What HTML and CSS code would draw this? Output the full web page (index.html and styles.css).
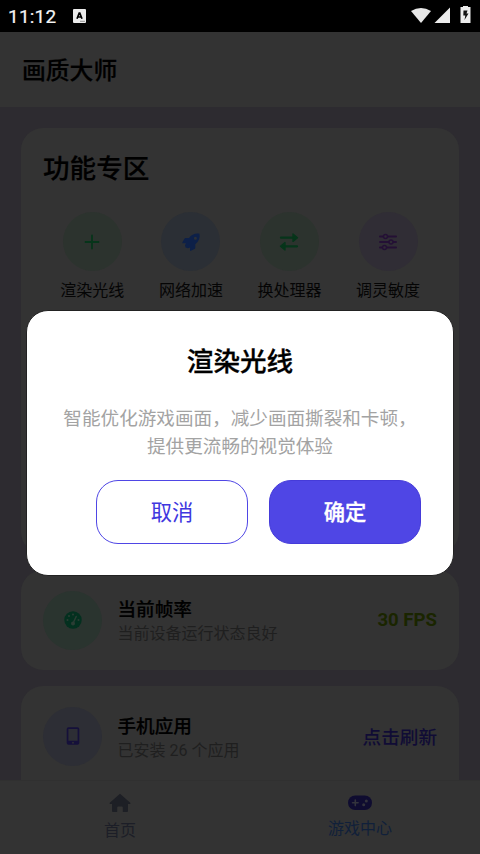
FILE: index.html
```html
<!DOCTYPE html>
<html lang="zh-CN">
<head>
<meta charset="utf-8">
<title>画质大师</title>
<link rel="stylesheet" href="styles.css">
</head>
<body>
<div class="screen">
  <div class="status">
    <span class="time">11:12</span>
    <svg class="kbd" width="13" height="14" viewBox="0 0 13 14"><rect width="13" height="14" rx="1" fill="#ececec"/><path d="M4 9.800 6.200 4.200H6.800L9 9.800M4.600 8h3.800" fill="none" stroke="#000" stroke-width="1.700"/><path d="M7 12.300h5" stroke="#777" stroke-width=".8"/></svg>
    <svg class="signals" width="62" height="20" viewBox="0 0 62 20"><path d="M1 5Q11-1 21 5L11 17Z" fill="#e8e8e8"/><path d="M24.500 17 40 1.500V17Z" fill="#ececec"/><path d="M50.500 1H53V0h5v1h2.500V17h-10Z" fill="#ececec"/><path d="M53.500 4.500h4l-1 3h2L54.500 14l.8-4.500h-2Z" fill="#111"/></svg>
  </div>
  <header class="appbar">画质大师</header>
  <main class="content">
    <section class="card features">
      <h2>功能专区</h2>
      <div class="grid">
        <div class="feature"><span class="disc green"><svg width="30" height="30" viewBox="0 0 30 30"><path d="M15 8.500v13M8.500 15h13" stroke="#06351a" stroke-width="1.800" stroke-linecap="round"/></svg></span>渲染光线</div>
        <div class="feature"><span class="disc blue"><svg width="30" height="30" viewBox="0 0 30 30"><path fill="#0d2048" fill-rule="evenodd" d="M23.500 6.700C19 6 15.500 7.500 13 11H9.800Q8.800 11 8.300 12L6.300 15.400Q6 16.300 7 16.300L10 16.200 9 18.300 9.500 20.500 11.900 21.200 14.100 20.500 14 23.200Q14 24.200 15 23.800L18.500 21.900Q19.300 21.400 19.300 20.400V17.200C22.800 14.500 24.300 11 23.500 6.700ZM19.400 9.700a1.500 1.500 0 1 1 0 3 1.500 1.500 0 0 1 0-3Z"/></svg></span>网络加速</div>
        <div class="feature"><span class="disc green"><svg width="30" height="30" viewBox="0 0 30 30"><path d="M7 10.700H19M11 19.300H23" stroke="#06351a" stroke-width="2.300" stroke-linecap="round"/><path d="M19 7v7.400l4.500-3.700ZM11 15.600V23l-4.500-3.700Z" fill="#06351a" stroke="#06351a" stroke-width="1.400" stroke-linejoin="round"/></svg></span>换处理器</div>
        <div class="feature"><span class="disc purple"><svg width="30" height="30" viewBox="0 0 30 30"><path d="M7 9.500h16M7 15h16M7 20.500h16" stroke="#241035" stroke-width="2" stroke-linecap="round"/><g fill="#302d35" stroke="#241035" stroke-width="1.500"><circle cx="12.500" cy="9.500" r="2"/><circle cx="18" cy="15" r="2"/><circle cx="11.500" cy="20.500" r="2"/></g></svg></span>调灵敏度</div>
      </div>
    </section>
    <section class="card row">
      <span class="disc mint"><svg width="18" height="18" viewBox="0 0 18 18"><circle cx="9" cy="9" r="8.700" fill="#03301f"/><path d="M9.200 12 12.200 5.500" stroke="#2b3d34" stroke-width="1.500" stroke-linecap="round"/><g fill="#2b3d34"><circle cx="9" cy="12.500" r="2"/><circle cx="9" cy="3.500" r="1"/><circle cx="5" cy="5" r="1"/><circle cx="3.500" cy="9" r="1"/><circle cx="14.500" cy="9" r="1"/></g></svg></span>
      <div class="info"><b>当前帧率</b><span>当前设备运行状态良好</span></div>
      <strong class="value fps">30 FPS</strong>
    </section>
    <section class="card row apps">
      <span class="disc indigo"><svg width="14" height="18" viewBox="0 0 14 18"><path fill="#15103a" fill-rule="evenodd" d="M2.500.3h9a1.800 1.800 0 0 1 1.800 1.800v13.800a1.800 1.800 0 0 1-1.800 1.800h-9A1.800 1.800 0 0 1 .7 15.900V2.100A1.800 1.800 0 0 1 2.500.3ZM2.400 2v11.700h9.200V2Zm4.600 12.700a1 1 0 1 0 0 2 1 1 0 0 0 0-2Z"/></svg></span>
      <div class="info"><b>手机应用</b><span>已安装 26 个应用</span></div>
      <strong class="value refresh">点击刷新</strong>
    </section>
  </main>
  <nav class="tabs">
    <div class="tab home"><svg width="22" height="20" viewBox="0 0 22 20"><path d="M11 .7 21.500 10q.4.800-.7.900H19V18q0 1-1 1h-4.200v-4.500q0-1-1-1H9.200q-1 0-1 1v4.500H4q-1 0-1-1v-7.100H1.200Q.1 10.800.5 10Z" fill="#1d1f25"/></svg>首页</div>
    <div class="tab game"><svg width="24" height="20" viewBox="0 0 24 20"><rect y="2.500" width="24" height="14.500" rx="7.250" fill="#0f0c30"/><path d="M7.300 7v5.600M4.500 9.800h5.600" stroke="#33333c" stroke-width="1.600" stroke-linecap="round"/><circle cx="18.300" cy="7.900" r="1.500" fill="#33333c"/><circle cx="15.700" cy="11.700" r="1.500" fill="#33333c"/></svg>游戏中心</div>
  </nav>
  <div class="dialog">
    <h3>渲染光线</h3>
    <p>智能优化游戏画面，减少画面撕裂和卡顿，<br>提供更流畅的视觉体验</p>
    <div class="actions"><button class="cancel">取消</button><button class="ok">确定</button></div>
  </div>
</div>
</body>
</html>
```
FILE: styles.css
```css
* { box-sizing: border-box; }
body { margin: 0; background: #333; font-family: Roboto, "Noto Sans CJK SC", sans-serif; }
h2, h3, p { margin: 0; }
svg { display: block; flex: none; }
.screen { position: relative; width: 480px; height: 854px; display: flex; flex-direction: column; overflow: hidden; }
.status { height: 32px; flex: none; background: #000; display: flex; align-items: center; padding: 0 8px; color: #f4f4f4; }
.time { width: 65px; font-size: 19px; font-weight: 400; line-height: 32px; letter-spacing: .2px; padding-top: 1px; -webkit-text-stroke: .2px #f4f4f4; }
.signals { margin: 0 0 0 auto; }
.appbar { height: 75px; flex: none; background: #333; padding: 3px 0 0 22px; font-size: 23.800px; font-weight: 500; line-height: 73px; color: #000; -webkit-text-stroke: .2px #000; }
.content { flex: 1; min-height: 0; overflow: hidden; background: #2d2b30; padding: 21px 21px 0; display: flex; flex-direction: column; gap: 16px; }
.card { flex: none; background: #333; border-radius: 22px; }
.features { height: 426px; padding: 22px 22px; }
.features h2 { font-size: 26.600px; font-weight: 500; line-height: 38px; color: #000; -webkit-text-stroke: .2px #000; }
.grid { display: grid; grid-template-columns: repeat(4, 98.600px); margin-top: 24px; }
.feature { display: flex; flex-direction: column; align-items: center; font-size: 16px; line-height: 24px; color: #050505; gap: 8px; }
.disc { width: 59px; height: 59px; flex: none; border-radius: 50%; display: flex; align-items: center; justify-content: center; }
.green { background: #2c332e; }
.blue { background: #2b2f35; }
.purple { background: #302d35; }
.mint { background: #2a342f; }
.indigo { background: #2d2e35; }
.row { height: 100px; display: flex; align-items: center; padding: 0 22px; }
.apps { height: 132px; padding-bottom: 32px; }
.info { margin-left: 15.500px; padding-top: 3px; flex: 1; display: flex; flex-direction: column; }
.apps .info { padding-top: 5px; }
.info b { font-size: 18.600px; font-weight: 500; line-height: 24px; color: #000; -webkit-text-stroke: .2px #000; }
.info span { font-size: 16px; line-height: 24px; color: #1f1f1f; }
.value { font-size: 18.600px; font-weight: 500; }
.fps { color: #1a2500; font-weight: 700; }
.refresh { color: #100c35; position: relative; top: -1px; }
.tabs { height: 74px; flex: none; background: #333; border-top: 1px solid #303030; display: flex; }
.tab { flex: 1; display: flex; flex-direction: column; align-items: center; font-size: 16px; line-height: 24px; padding-top: 12px; }
.home { color: #1c1e27; gap: 6px; }
.game { color: #10203a; gap: 4px; }
.dialog { position: absolute; left: 26px; top: 310px; width: 428px; height: 266px; background: #fff; border: 1px solid #222; border-radius: 22px; padding-top: 32px; text-align: center; }
.dialog h3 { font-size: 26.600px; font-weight: 500; line-height: 38px; color: #000; -webkit-text-stroke: .3px #000; }
.dialog p { margin-top: 24px; font-size: 18.600px; line-height: 28px; color: #a3a3a3; white-space: nowrap; font-weight: 400; }
.actions { display: flex; justify-content: flex-end; gap: 21px; padding-right: 32px; margin-top: 19px; }
button { width: 152px; height: 64px; padding: 2px 0 0; border-radius: 22px; font: 400 21.300px/60px Roboto, "Noto Sans CJK SC", sans-serif; }
.cancel { background: #fff; color: #4037df; border: 1px solid #4f46e5; }
.ok { background: #4f46e5; color: #fff; border: 1px solid #453bd9; font-weight: 500; -webkit-text-stroke: .3px #fff; }
```
